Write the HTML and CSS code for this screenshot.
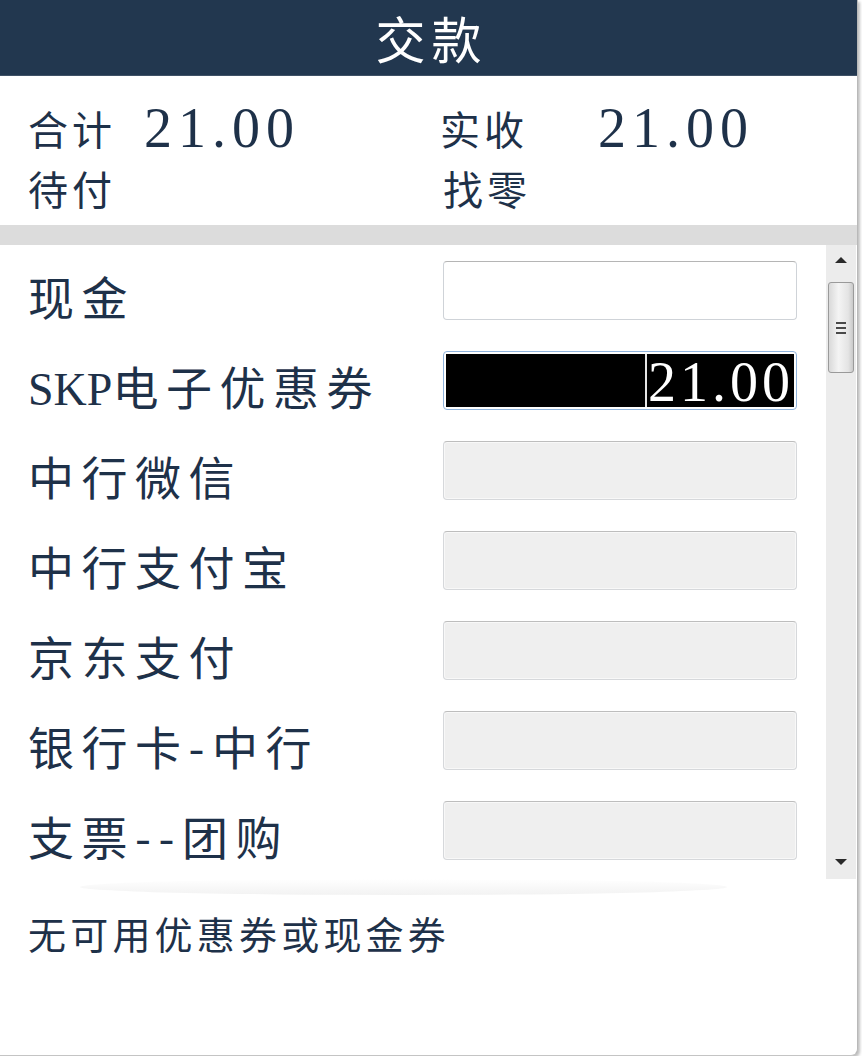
FILE: index.html
```html
<!DOCTYPE html>
<html lang="zh-CN">
<head>
  <meta charset="UTF-8" />
  <meta name="viewport" content="width=device-width, initial-scale=1.0"/>
  <title>交款</title>
  <link rel="stylesheet" href="styles.css">
</head>
<body>
  <div class="dialog">
    <div class="header">交款</div>

    <div class="summary">
      <div class="sum-item"><span>合计</span><span class="num first">21.00</span></div>
      <div class="sum-item"><span>实收</span><span class="num second">21.00</span></div>
      <div class="sum-item"><span>待付</span></div>
      <div class="sum-item shift"><span>找零</span></div>
    </div>

    <div class="divider"></div>

    <div class="pay-list">
      <div class="rows">
        <div class="row">
          <label>现金</label>
          <div class="field"></div>
        </div>
        <div class="row">
          <label><span class="latin">SKP</span>电子优惠券</label>
          <div class="field focused">
            <div class="selection"><span class="sel-text">21.00</span></div>
          </div>
        </div>
        <div class="row">
          <label>中行微信</label>
          <div class="field disabled"></div>
        </div>
        <div class="row">
          <label>中行支付宝</label>
          <div class="field disabled"></div>
        </div>
        <div class="row">
          <label>京东支付</label>
          <div class="field disabled"></div>
        </div>
        <div class="row">
          <label>银行卡-中行</label>
          <div class="field disabled"></div>
        </div>
        <div class="row">
          <label>支票--团购</label>
          <div class="field disabled"></div>
        </div>
      </div>

      <div class="scrollbar">
        <div class="arrow up"></div>
        <div class="thumb">
          <span></span><span></span><span></span>
        </div>
        <div class="track"></div>
        <div class="arrow down"></div>
      </div>
    </div>

    <div class="shade"></div>

    <div class="notice">无可用优惠券或现金券</div>
  </div>
</body>
</html>
```

FILE: styles.css
```css
:root {
  --navy: #22374f;
  --text: #1e3149;
  --cjk: "Noto Sans CJK SC", sans-serif;
  --latin: "Liberation Serif", "Noto Sans CJK SC", serif;
}

body {
  margin: 0;
  padding: 0;
  background: #ffffff;
  font-family: var(--cjk);
  color: var(--text);
}

.dialog {
  width: 857px;
  height: 1055px;
  background: #ffffff;
  border-right: 1px solid #b9b9b9;
  border-bottom: 1px solid #c4c4c4;
  border-bottom-right-radius: 7px;
  box-shadow: 2px 2px 3px rgba(0, 0, 0, 0.25);
  display: flex;
  flex-direction: column;
  overflow: hidden;
}

.header {
  height: 75px;
  line-height: 75px;
  background: var(--navy);
  border-bottom: 1px solid #3f5166;
  color: #ffffff;
  text-align: center;
  font-size: 50px;
  letter-spacing: 6px;
  padding-left: 6px;
  font-weight: 400;
}

.summary {
  display: grid;
  grid-template-columns: 412px 1fr;
  grid-auto-rows: 60px;
  padding: 22px 0 7px 28px;
  font-size: 40px;
  letter-spacing: 4px;
}

.sum-item {
  display: flex;
  align-items: center;
}

.sum-item.shift {
  padding-left: 3px;
}

.num {
  font-family: var(--latin);
  font-size: 56px;
  letter-spacing: 6px;
}

.num.first {
  margin-left: 28px;
}

.num.second {
  margin-left: 70px;
}

.divider {
  height: 20px;
  background: #dcdcdc;
}

.pay-list {
  display: flex;
  height: 634px;
}

.rows {
  flex: 1;
  padding-left: 28px;
}

.row {
  height: 90px;
  display: flex;
  align-items: center;
}

.row label {
  width: 415px;
  font-size: 46px;
  letter-spacing: 7.5px;
  padding-top: 10px;
}

.latin {
  font-family: var(--latin);
  letter-spacing: 0;
}

.field {
  width: 352px;
  height: 57px;
  border: 1px solid #cfd3d8;
  border-top-color: #b5b5b5;
  border-radius: 4px;
  background: #ffffff;
  box-sizing: content-box;
}

.field.disabled {
  background: #efefef;
  border-color: #d6d8db;
  border-top-color: #bdbdbd;
  box-shadow: inset 0 0 0 1px #f8f8f8;
}

.field.focused {
  border-color: #8fb3dc;
  padding: 2px;
  width: 348px;
  height: 53px;
}

.selection {
  height: 100%;
  background: #000000;
  display: flex;
  justify-content: flex-end;
}

.sel-text {
  border-left: 2px solid #e6e6e6;
  color: #ffffff;
  font-family: var(--latin);
  font-size: 56px;
  line-height: 56px;
  letter-spacing: 4px;
  padding-left: 1px;
}

.scrollbar {
  width: 30px;
  margin-right: 1px;
  background: #ececec;
  display: flex;
  flex-direction: column;
  align-items: center;
}

.arrow {
  height: 30px;
  width: 100%;
  position: relative;
}

.arrow::after {
  content: '';
  position: absolute;
  left: 9px;
  top: 12px;
  border-left: 6px solid transparent;
  border-right: 6px solid transparent;
}

.arrow.up::after {
  border-bottom: 6px solid #2a2a2a;
}

.arrow.down::after {
  top: 10px;
  border-top: 6px solid #2a2a2a;
}

.thumb {
  width: 26px;
  height: 91px;
  margin-top: 7px;
  border: 1px solid #9a9a9a;
  border-radius: 3px;
  background: linear-gradient(to right, #d9d9d9, #f4f4f4 40%, #e4e4e4 80%, #c9c9c9);
  box-sizing: border-box;
  display: flex;
  flex-direction: column;
  align-items: center;
  justify-content: center;
  gap: 3px;
}

.thumb span {
  width: 10px;
  height: 2px;
  background: #4a4a4a;
}

.track {
  flex: 1;
}

.shade {
  height: 16px;
  margin: 0 130px 0 80px;
  background: linear-gradient(to bottom, #ffffff, #efefef);
  border-radius: 50%;
  opacity: 0.8;
}

.notice {
  padding: 10px 0 0 28px;
  font-size: 38px;
  letter-spacing: 4.2px;
}
```
